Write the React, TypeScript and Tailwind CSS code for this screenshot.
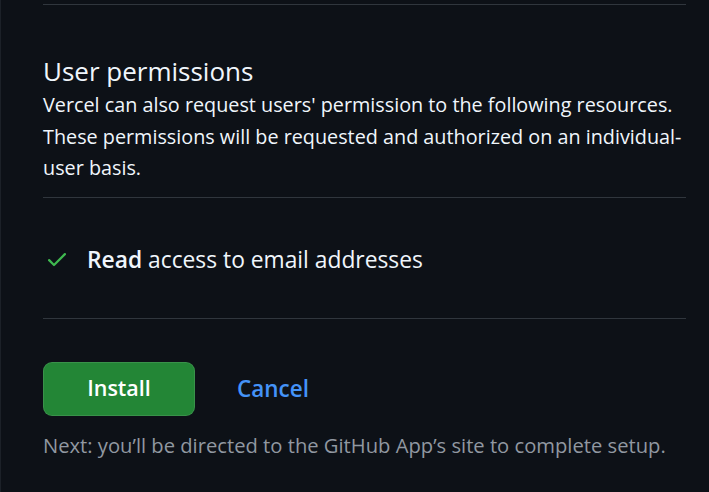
const font = { fontFamily: '"Open Sans", "Noto Sans", sans-serif' }

function CheckIcon() {
  return (
    <svg viewBox="0 0 16 16" width="24" height="24" fill="currentColor" className="shrink-0 text-[#3fb950]">
      <path d="M13.78 4.22a.75.75 0 0 1 0 1.06l-7.25 7.25a.75.75 0 0 1-1.06 0L2.22 9.28a.751.751 0 0 1 .018-1.042.751.751 0 0 1 1.042-.018L6 10.94l6.72-6.72a.75.75 0 0 1 1.06 0Z" />
    </svg>
  )
}

export default function App() {
  return (
    <div className="h-[492px] w-[709px] overflow-hidden bg-[#0d1117] border-l border-[#1c2128]" style={font}>
      <div className="ml-[42px] w-[643px] pt-[4px]">
        {/* User permissions */}
        <div className="border-t border-[#30363d] pt-[48px] pb-[13px] border-b">
          <h3 className="text-[26px] leading-[36px] font-normal text-[#f0f6fc]">User permissions</h3>
          <p className="text-[19.8px] leading-[31.5px] text-[#f0f6fc]">
            Vercel can also request users' permission to the following resources. These permissions will be requested and authorized on an individual-user basis.
          </p>
        </div>

        <ul className="border-b border-[#30363d] pt-[45px] pb-[42px]">
          <li className="flex items-center gap-[18px] pl-[2px] text-[22.8px] leading-[33px] text-[#f0f6fc]">
            <CheckIcon />
            <span>
              <strong className="font-semibold">Read</strong> access to email addresses
            </span>
          </li>
        </ul>

        {/* Actions */}
        <div className="mt-[43px] flex items-center gap-[42px]">
          <button className="h-[54px] w-[152px] rounded-[9px] border border-[#ffffff1a] bg-[#238636] text-[21.5px] font-semibold text-white">
            Install
          </button>
          <a href="#" className="text-[22.5px] font-semibold text-[#4493f8]">
            Cancel
          </a>
        </div>
        <p className="mt-[14px] text-[20.2px] leading-[31.5px] text-[#9198a1]">
          Next: you’ll be directed to the GitHub App’s site to complete setup.
        </p>
      </div>
    </div>
  )
}
